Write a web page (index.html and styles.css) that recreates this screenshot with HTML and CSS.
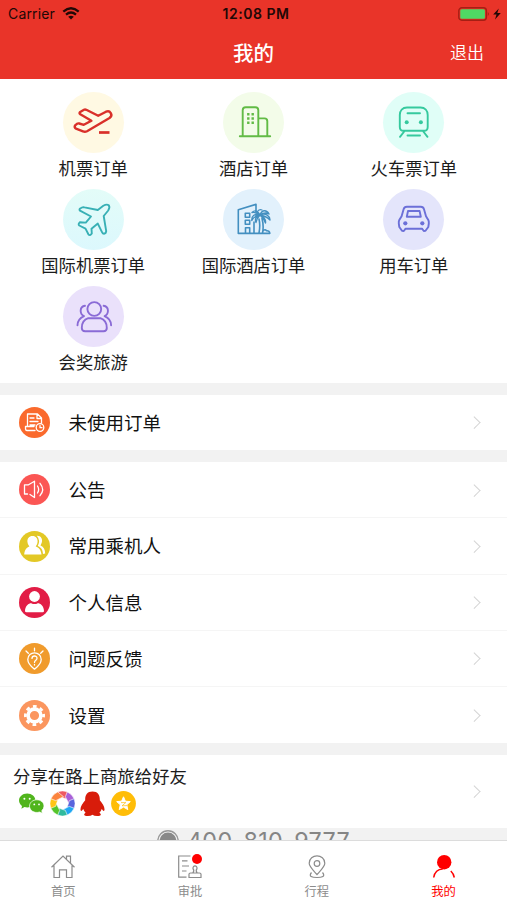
FILE: index.html
```html
<!DOCTYPE html>
<html lang="zh-CN">
<head>
<meta charset="utf-8">
<title>我的</title>
<link rel="stylesheet" href="styles.css">
</head>
<body>
<div class="app">
  <header class="header">
    <div class="status">
      <div class="carrier">Carrier
        <svg width="18" height="13" viewBox="0 0 18 13" fill="none" stroke="#210806" stroke-width="2.3"><path d="M1.3 4.6Q9-2 16.7 4.6M4 7.6Q9 3.4 14 7.6"/><path d="M6.2 9.8Q9 7.5 11.8 9.8L9 12.5Z" fill="#210806" stroke="none"/></svg>
      </div>
      <div class="clock">12:08 PM</div>
      <div class="battery">
        <svg width="44" height="14" viewBox="0 0 44 14"><rect x=".8" y=".8" width="27.6" height="12.4" rx="3" fill="none" stroke="#a51f14" stroke-width="1.4"/><rect x="2.3" y="2.3" width="24.6" height="9.4" rx="1.5" fill="#4fd964"/><path d="M29.8 5Q32 7 29.8 9Z" fill="#a51f14"/><path d="M40.8 1.5 35.2 7.6H38.5L37 12.5 42.8 6H39.3Z" fill="#210806"/></svg>
      </div>
    </div>
    <div class="nav"><span></span><h1>我的</h1><span class="logout">退出</span></div>
  </header>

  <section class="orders">
    <div class="order"><div class="disc takeoff"><svg viewBox="0 0 61 61"><path d="M17.2 20 21 17.8Q22 17.2 23.3 17.8L35.2 23.8 43 19.7C47 17.8 50.6 23 46.5 26L24 39.2Q22 40.2 20 39.4L13 36.7Q11 35.6 12.1 33.4L14 31.8Q15 31.2 16.2 31.5L20.8 32.8 28.4 28.7 17.3 22.3Q15.8 21.1 17.2 20Z"/><path stroke-width="2.7" d="M36 40.5H46.5"/></svg></div><span>机票订单</span></div>
    <div class="order"><div class="disc hotel"><svg viewBox="0 0 61 61"><path d="M19.7 44V18.2Q19.7 15.2 22.7 15.2H32.3Q35.3 15.2 35.3 18.2V44M35.3 26.4H41.5Q44.3 26.4 44.3 29.2V44M16.8 44.2H47.2"/><path stroke-width="2.4" stroke-dasharray="2.4 1.9" stroke-linecap="butt" d="M25.3 21V32.5M29.7 21V32.5"/></svg></div><span>酒店订单</span></div>
    <div class="order"><div class="disc train"><svg viewBox="0 0 61 61"><path d="M24 15.5H37.5C42 15.5 44.7 18.5 44.7 23V35Q44.7 38.8 41 38.8H20.5Q16.8 38.8 16.8 35V23C16.8 18.5 19.5 15.5 24 15.5ZM24.5 21.2H37M24.5 43.5H37M21.2 39.5 17 44.8M40.3 39.5 44.5 44.8"/><circle class="dot" cx="23.7" cy="30.3" r="2"/><circle class="dot" cx="37.9" cy="30.3" r="2"/></svg></div><span>火车票订单</span></div>
    <div class="order"><div class="disc flight"><svg viewBox="0 0 61 61"><path d="M17.2 19.5 19 18.5Q20 18 21.5 18.4L34.8 21 40.3 16.8Q43.7 14.8 45.7 16.2 47.3 18.3 45.2 21.5L40.7 27 43.2 42.2Q43 44.5 41 44.8 39.7 44.8 39 43.2L34.8 34.6 28.5 39.7 28.8 44.5Q27 47.2 25.4 45.3L22.5 39.6 16.3 36.5Q14.8 35.2 16.7 33.3L22.8 33.6 28 27.5 17 21.7Q15.9 20.7 17.2 19.5Z"/></svg></div><span>国际机票订单</span></div>
    <div class="order"><div class="disc resort"><svg viewBox="0 0 61 61"><path d="M33 23V15.3L15.3 20.7V44.4H46.8Q46.8 41.5 43.5 41.8 42 39.5 40 42M22.3 24.3H26.7V28.3H22.3ZM22.3 31.2H26.7V35.2H22.3ZM22.5 44V38.7H26.7V44M31 33V44M36 30Q37.5 36 36 44M39 29.5Q41 37 39.5 44"/><path stroke-width="1.4" d="M37 26C34 20.5 31 21.5 29 23.5 32 23 34 23.8 37 26 31 24.5 28.5 27 28.8 31.5 30.5 28 33 26.5 37 26 33 27.5 31.5 30 33 33.5 33.5 30 35 28 37 26 39 20 44 21 46 25 42.5 23 40 24 37 26 43 23.5 46.8 27 47 31 43 27 40 26.5 37 26 41 28 43 30 42.5 34 41.5 30.5 39.5 29 37 26Z"/><path stroke-width="1.2" d="M34 23Q36 19.7 39 21"/></svg></div><span>国际酒店订单</span></div>
    <div class="order"><div class="disc car"><svg viewBox="0 0 61 61"><path d="M23.8 17.8H37.8Q40.3 17.8 41 20.2L43 27.2 45.3 31Q46 32.3 45.8 34.5L45.3 38 42.5 41.8 40.8 42 39 39.7H22.6L20.8 42 19 41.8 16.3 38 15.8 34.5Q15.6 32.3 16.3 31L18.6 27.2 20.6 20.2Q21.3 17.8 23.8 17.8ZM25 22H36.6L37.8 27.7H23.8Z"/><circle class="dot" cx="22.3" cy="34.3" r="2.1"/><circle class="dot" cx="39.3" cy="34.3" r="2.1"/></svg></div><span>用车订单</span></div>
    <div class="order"><div class="disc group"><svg viewBox="0 0 61 61"><circle cx="31.3" cy="23" r="6.9"/><path d="M25.3 32.2H37.3C41.5 33.5 43.8 37.5 43.8 42Q43.8 45.2 40.5 45.2H22.1Q18.8 45.2 18.8 42C18.8 37.5 21.1 33.5 25.3 32.2Z"/><path d="M22 19.8C16.5 20.5 16.3 28 21 30.2 17 32 14.6 35.2 14.5 39.2M40.6 19.8C46.1 20.5 46.3 28 41.6 30.2 45.6 32 48 35.2 48.1 39.2"/></svg></div><span>会奖旅游</span></div>
  </section>

  <section class="card">
    <div class="row"><svg class="icon" viewBox="0 0 31 31"><circle cx="15.5" cy="15.5" r="15.5" fill="#fa6a2d"/><g class="line"><path d="M16 23.5H8Q6.5 23.5 6.5 21.5V19.5H8.5V7H18.5L22.5 11V16M18 7V11.5H22.5M11 11H15M11 14.5H19M11 18H16M8.5 19.5H15"/><circle cx="21" cy="20.5" r="3.8"/><path d="M21 18.5V20.7H23"/></g></svg><span class="label">未使用订单</span><i class="chevron"></i></div>
  </section>

  <section class="card menu">
    <div class="row"><svg class="icon" viewBox="0 0 31 31"><circle cx="15.5" cy="15.5" r="15.5" fill="#fb5654"/><path class="line" d="M8.5 20H5.5V10.8H9.5L15.5 7.2V23.5L11 20.5M18.5 12Q20.8 15.5 18.5 19M21 9.3Q26.3 15.5 21 21.7"/></svg><span class="label">公告</span><i class="chevron"></i></div>
    <div class="row"><svg class="icon" viewBox="0 0 31 31"><circle cx="15.5" cy="15.5" r="15.5" fill="#e3c826"/><path fill="#fff" d="M13.5 5C17 5 18.8 7.5 18.6 10.8Q18.5 13.5 16.7 15.4C20.5 16.8 22 19 22.5 23.6H5.2C5.5 19 7 16.8 10.4 15.4Q8.5 13.5 8.4 10.8C8.2 7.5 10 5 13.5 5Z"/><path fill="#fff" d="M17.8 4.7C22 4.5 24 8 22.7 11.8L21.5 14.5C24.8 16 26 18.5 26.2 22.4L24 23C23.7 18.5 22 16.3 18.8 15Q21.8 9.5 17.8 4.7Z"/></svg><span class="label">常用乘机人</span><i class="chevron"></i></div>
    <div class="row"><svg class="icon" viewBox="0 0 31 31"><circle cx="15.5" cy="15.5" r="15.5" fill="#e21d46"/><circle cx="15.5" cy="9.5" r="5.4" fill="#fff"/><path fill="#fff" d="M6 24C6 18.8 9.8 16.2 12.2 16.2Q15.5 18 18.8 16.2C21.2 16.2 25 18.8 25 24Q25 25.3 23.5 25.3H7.5Q6 25.3 6 24Z"/></svg><span class="label">个人信息</span><i class="chevron"></i></div>
    <div class="row"><svg class="icon" viewBox="0 0 31 31"><circle cx="15.5" cy="15.5" r="15.5" fill="#f09b2c"/><path class="line" stroke-width="1.6" d="M15.5 26.2Q8.8 21 8.8 16.5C8.8 7.6 22.2 7.6 22.2 16.5Q22.2 21 15.5 26.2ZM13 15.4C13 12.2 18 12.2 18 15.3 18 17.2 15.5 17.2 15.5 19.4M15.5 21.5V22M15.5 5.2V7.8M7 8 9.3 10.3M24 8 21.7 10.3"/></svg><span class="label">问题反馈</span><i class="chevron"></i></div>
    <div class="row"><svg class="icon" viewBox="0 0 31 31"><circle cx="15.5" cy="15.5" r="15.5" fill="#fb965f"/><circle cx="15.5" cy="15.5" r="6.4" fill="none" stroke="#fff" stroke-width="3.6"/><circle cx="15.5" cy="15.5" r="9.1" fill="none" stroke="#fff" stroke-width="2.8" stroke-dasharray="3.7 3.447" stroke-dashoffset="1.85"/></svg><span class="label">设置</span><i class="chevron"></i></div>
  </section>

  <section class="card share">
    <div>
      <p>分享在路上商旅给好友</p>
      <div class="channels">
        <svg viewBox="0 0 25 25"><path fill="#51b51d" d="M8.2 2.5C12.8 2.5 16.4 5.6 16.4 9.5S12.8 16.4 8.2 16.4L5.5 16 2.4 17.7 3 14.9C-2.9 10.4.6 2.5 8.2 2.5Z"/><path fill="#51b51d" stroke="#fff" stroke-width=".7" d="M17.8 8.8C22 8.8 25 11.7 25 15.1Q25 17.7 22.8 19.7L23.3 22.3 20.7 21C15 22.7 10.5 19.3 10.5 15.1 10.5 11.7 13.7 8.8 17.8 8.8Z"/><g fill="#fff"><circle cx="5.4" cy="7.8" r="1"/><circle cx="10.7" cy="7.8" r="1"/><circle cx="15.3" cy="13.4" r=".9"/><circle cx="20" cy="13.4" r=".9"/></g></svg>
        <svg viewBox="-12.5 -12.5 25 25"><g stroke="#fff" stroke-width=".6"><path fill="#ef5961" d="M-4.8-11.6A12.5 12.5 0 0 1 4.8-11.6L5.5-4.1-2.8-6.8Z"/><path fill="#a960d8" transform="rotate(45)" d="M-4.8-11.6A12.5 12.5 0 0 1 4.8-11.6L5.5-4.1-2.8-6.8Z"/><path fill="#5864dd" transform="rotate(90)" d="M-4.8-11.6A12.5 12.5 0 0 1 4.8-11.6L5.5-4.1-2.8-6.8Z"/><path fill="#1fa7f2" transform="rotate(135)" d="M-4.8-11.6A12.5 12.5 0 0 1 4.8-11.6L5.5-4.1-2.8-6.8Z"/><path fill="#30ba9d" transform="rotate(180)" d="M-4.8-11.6A12.5 12.5 0 0 1 4.8-11.6L5.5-4.1-2.8-6.8Z"/><path fill="#55c52b" transform="rotate(225)" d="M-4.8-11.6A12.5 12.5 0 0 1 4.8-11.6L5.5-4.1-2.8-6.8Z"/><path fill="#ffc516" transform="rotate(270)" d="M-4.8-11.6A12.5 12.5 0 0 1 4.8-11.6L5.5-4.1-2.8-6.8Z"/><path fill="#fb833d" transform="rotate(315)" d="M-4.8-11.6A12.5 12.5 0 0 1 4.8-11.6L5.5-4.1-2.8-6.8Z"/></g></svg>
        <svg viewBox="0 0 25 25"><path fill="#d81c0a" d="M12.5.5C18 .5 20 4 19.8 9.3 22.7 12.5 25.3 16.8 24.3 19.5 23.7 20.7 22.5 19 21.7 18Q21 20.3 19.4 21.8C22.5 24.3 20 25 17.2 25Q14 25 12.5 23.7 11 25 7.8 25C5 25 2.5 24.3 5.6 21.8Q4 20.3 3.3 18C2.5 19 1.3 20.7.7 19.5-.3 16.8 2.3 12.5 5.2 9.3 5 4 7 .5 12.5.5Z"/></svg>
        <svg viewBox="0 0 25 25"><circle cx="12.5" cy="12.5" r="12.4" fill="#ffbd08"/><path fill="#fff" stroke="#fff" stroke-width="1" stroke-linejoin="round" d="M12.5 5.8 14.4 10.2 19.3 10.6 15.7 13.8 16.8 18.6 12.5 16.1 8.2 18.6 9.3 13.8 5.7 10.6 10.6 10.2Z"/><path d="M10 11.6H14.8L11 14.8 16 14.6" fill="none" stroke="#ffbd08" stroke-width=".7"/></svg>
      </div>
    </div>
    <i class="chevron"></i>
  </section>

  <div class="hotline"><svg width="22" height="22" viewBox="0 0 22 22"><circle cx="11" cy="11" r="10.2" fill="none" stroke="#999" stroke-width="1.4"/><circle cx="11" cy="11" r="8.4" fill="#888"/></svg><span>400-810-9777</span></div>

  <nav class="tabs">
    <div class="tab"><svg viewBox="0 0 26 26"><path d="M1.5 13.3 13 2 24.5 13.3M4 11.5V23.5H9.5V15.8H16.5V23.5H22V11.5M16.5 5V2.2H20.5V9"/></svg><span>首页</span></div>
    <div class="tab"><svg viewBox="0 0 26 26"><path d="M13.5 2H1.7V23.2H9.5M5 6.8H10.5M5 12H12M5 17H9.5M12 23.5V20.3Q12 19 13.5 19H22.5Q24 19 24 20.3V23.5ZM15.8 19Q17.7 17 16 14.7C15.5 10.8 20.5 10.8 20 14.7Q18.3 17 20.2 19"/></svg><i class="badge"></i><span>审批</span></div>
    <div class="tab"><svg viewBox="0 0 26 26"><path d="M13 20.5C9.5 16.5 5.2 12.8 5.2 9.3 5.2-.6 20.8-.6 20.8 9.3 20.8 12.8 16.5 16.5 13 20.5ZM7.5 18.5C4.2 22.5 8 23.5 13 23.5S21.8 22.5 18.5 18.5"/><circle cx="13" cy="9.5" r="2.8"/></svg><span>行程</span></div>
    <div class="tab active"><svg viewBox="0 0 26 26"><circle cx="13.2" cy="8.2" r="7.2" fill="#f00" stroke="none"/><path stroke-width="1.5" d="M2.7 23.5C3.3 18.5 7 14.8 11.8 15M19.8 17Q22.5 19.5 23.3 23.5"/></svg><span>我的</span></div>
  </nav>
</div>
</body>
</html>
```

FILE: styles.css
```css
* { box-sizing: border-box; }
body { margin: 0; font-family: "Noto Sans CJK SC", sans-serif; color: #1c1c1c; }
svg { display: block; flex: none; }
h1, p { margin: 0; }
.app { width: 507px; height: 900px; display: flex; flex-direction: column; overflow: hidden; background: #f2f2f2; }

.header { height: 79px; background: #e93429; flex: none; }
.status { height: 27px; display: grid; grid-template-columns: 1fr auto 1fr; align-items: center; padding: 0 5px 0 8px; font: 14px/27px Inter, sans-serif; color: #210806; }
.carrier { display: flex; align-items: center; gap: 7px; letter-spacing: .15px; }
.clock { font-weight: 600; letter-spacing: .55px; padding-left: 2px; }
.battery { display: flex; justify-content: flex-end; }
.nav { height: 52px; display: grid; grid-template-columns: 1fr auto 1fr; align-items: center; padding: 0 23px 2px; color: #fff; }
.nav h1 { font-size: 20.5px; line-height: 50px; font-weight: 500; }
.logout { text-align: right; font-size: 17px; font-weight: 350; line-height: 50px; }

.orders { height: 304px; flex: none; background: #fff; padding: 12.5px 13px 0; display: grid; grid-template-columns: repeat(3, 1fr); grid-auto-rows: 97.3px; align-content: start; }
.order { display: flex; flex-direction: column; align-items: center; font-size: 17.3px; line-height: 29px; }
.disc { width: 61px; height: 61px; border-radius: 50%; flex: none; }
.disc svg { width: 61px; height: 61px; fill: none; stroke: currentColor; stroke-width: 1.9; stroke-linejoin: round; stroke-linecap: round; }
.disc .dot { fill: currentColor; stroke: none; }
.takeoff { background: #fff9e3; color: #d9302a; }
.takeoff svg { stroke-width: 2.4; stroke-linecap: butt; }
.hotel { background: #f3fce9; color: #62bb46; }
.train { background: #e0fef7; color: #36c99e; }
.flight { background: linear-gradient(180deg, #e3fcf8, #dcf8fd); color: #38b0b5; }
.resort { background: #e2f1fc; color: #438fc0; }
.resort svg { stroke-width: 1.6; }
.car { background: #e4e5fb; color: #6c70d8; }
.group { background: #eae1fb; color: #8a6bd6; }

.card { background: #fff; margin-top: 12px; flex: none; }
.row { height: 55.3px; display: flex; align-items: center; padding: 0 26px 0 19px; }
.menu .row { height: 56.2px; border-bottom: 1px solid #f5f5f5; }
.menu .row:last-child { border-bottom: 0; }
.icon { width: 31px; height: 31px; margin-right: 18.5px; }
.line { fill: none; stroke: #fff; stroke-width: 1.3; stroke-linejoin: round; stroke-linecap: round; }
.label { flex: 1; font-size: 18.5px; line-height: 30px; padding-bottom: 1.2px; color: #111; }
.chevron { width: 8.5px; height: 8.5px; border: solid #d4d4d4; border-width: 1.5px 1.5px 0 0; transform: rotate(45deg); margin-right: 3px; }
.share { height: 73px; display: flex; justify-content: space-between; align-items: center; padding: 0 26px 0 13px; }
.share p { font-size: 17.4px; line-height: 28px; }
.channels { display: flex; gap: 5.7px; padding: 1px 0 0 6px; margin-bottom: 6px; }
.channels svg { width: 25px; height: 25px; }

.hotline { height: 11.7px; flex: none; overflow: hidden; display: flex; justify-content: center; align-items: flex-start; gap: 8px; color: #858585; }
.hotline svg { margin-top: 2px; }
.hotline span { font: 23.3px/26px Inter, sans-serif; letter-spacing: .35px; }

.tabs { flex: 1; min-height: 0; background: #fff; border-top: 1px solid #dcdcdc; display: grid; grid-template-columns: repeat(4, 1fr); }
.tab { position: relative; display: flex; flex-direction: column; align-items: center; padding-top: 13.5px; color: #8c8c8c; font-size: 12.3px; line-height: 18px; }
.tab svg { width: 26px; height: 26px; fill: none; stroke: currentColor; stroke-width: 1.2; margin-bottom: 2px; }
.badge { position: absolute; top: 13px; left: 65px; width: 10px; height: 10px; border-radius: 50%; background: #f00; }
.active { color: #f00; }
```
